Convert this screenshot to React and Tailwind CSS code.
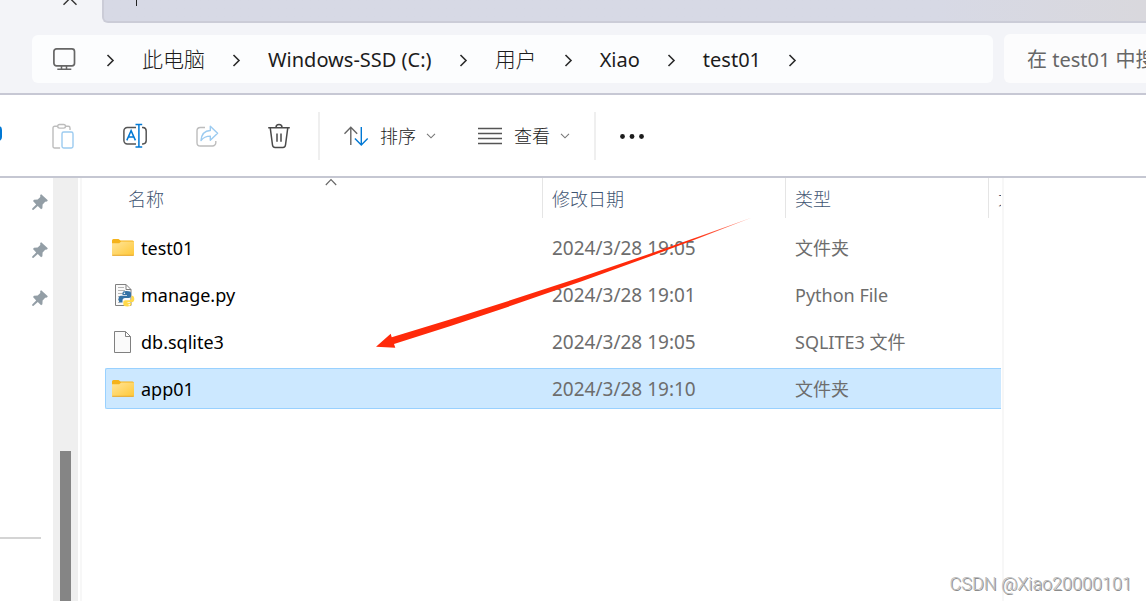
const crumbs = ["此电脑", "Windows-SSD (C:)", "用户", "Xiao", "test01"];

const files = [
  { name: "test01", date: "2024/3/28 19:05", type: "文件夹", icon: "folder" },
  { name: "manage.py", date: "2024/3/28 19:01", type: "Python File", icon: "python" },
  { name: "db.sqlite3", date: "2024/3/28 19:05", type: "SQLITE3 文件", icon: "file" },
  { name: "app01", date: "2024/3/28 19:10", type: "文件夹", icon: "folder", selected: true },
];

const CrumbChevron = () => (
  <svg className="h-3.5 w-[9px] shrink-0" viewBox="0 0 9 14" fill="none" stroke="#2b2b2b" strokeWidth="1.6">
    <path d="M1.5 2 7 7.500l-5.500 5.500" />
  </svg>
);

const SmallChevron = () => (
  <svg className="h-1.5 w-2.5 shrink-0" viewBox="0 0 10 6" fill="none" stroke="#777" strokeWidth="1.1">
    <path d="M1 .8 5 4.8 9 .8" />
  </svg>
);

const MonitorIcon = () => (
  <svg className="mr-0.5 h-6 w-6 shrink-0" viewBox="0 0 24 24" fill="none" stroke="#666" strokeWidth="1.7">
    <rect x="0.900" y="0.900" width="20.6" height="17" rx="2.6" />
    <path d="M8.500 18v3.200M13.500 18v3.200M4.300 21.300h14" strokeWidth="1.5" />
  </svg>
);

const CopyIcon = () => (
  <svg className="h-7 w-6" viewBox="0 0 24 28" fill="none" stroke="#0078d4" strokeWidth="2">
    <rect x="6" y="5" width="16" height="13" rx="3" />
  </svg>
);

const PasteIcon = () => (
  <svg className="h-7 w-6" viewBox="0 0 24 28" fill="none" strokeWidth="1.4">
    <path d="M6.5 4.2H3.7A1.7 1.7 0 0 0 2 5.9v18.3A1.7 1.7 0 0 0 3.7 26h5.4M14.5 4.2h2.8A1.7 1.7 0 0 1 19 5.9v2" stroke="#bdbdbd" />
    <rect x="6.7" y="2.5" width="7.8" height="3.6" rx="1.8" stroke="#bdbdbd" />
    <rect x="11" y="10" width="11" height="16" rx="1.7" stroke="#9ccbf0" />
  </svg>
);

const RenameIcon = () => (
  <svg className="h-7 w-6" viewBox="0 0 24 28" fill="none" strokeWidth="1.5">
    <path d="M13 5.5H4.3A3.4 3.4 0 0 0 .9 8.9v9.6a3.4 3.4 0 0 0 3.4 3.4H13M19 5.5h1a3.4 3.4 0 0 1 3.2 3.4v9.6a3.4 3.4 0 0 1-3.2 3.4h-1" stroke="#555" />
    <path d="M3.8 18.4 8.1 8.7l4.3 9.7M5.4 15.1h5.5M12.5 2.5h6.7M12.5 25h6.7M15.9 2.5V25" stroke="#0078d4" />
  </svg>
);

const ShareIcon = () => (
  <svg className="h-7 w-6" viewBox="0 0 24 28" fill="none" strokeWidth="1.4">
    <path d="M10 5.5H5.3a3.3 3.3 0 0 0-3.3 3.3v11.9A3.3 3.3 0 0 0 5.3 24h12.2a3.3 3.3 0 0 0 3.3-3.3v-1.8" stroke="#bdbdbd" />
    <path d="M15.3 4.3v4.2C9.8 8.8 6.5 12 6 18.5c2.4-3.2 5.3-4.4 9.3-4.4v4.2l7.3-7Z" stroke="#9ccbf0" strokeLinejoin="round" />
  </svg>
);

const TrashIcon = () => (
  <svg className="h-7 w-6" viewBox="0 0 24 28" fill="none" stroke="#4a4a4a" strokeWidth="1.5">
    <path d="M1.2 5.7h21.6M9 5.4a3 2.8 0 0 1 6 0M3.2 5.7 5.5 23a2.6 2.6 0 0 0 2.6 2.4h7.8a2.6 2.6 0 0 0 2.6-2.4l2.3-17.3M10 11.5v8.2M14 11.5v8.2" />
  </svg>
);

const SortIcon = () => (
  <svg className="h-6 w-[26px]" viewBox="0 0 26 24" fill="none" strokeWidth="1.4">
    <path d="M6.800 21V3.300M.5 9.700l6.300-6.400 6.400 6.400" stroke="#666" />
    <path d="M17.300 3v17.800M10.900 14.600l6.400 6.400 6.400-6.400" stroke="#0078d4" />
  </svg>
);

const FolderIcon = () => (
  <svg className="h-6 w-6 shrink-0" viewBox="0 0 24 24">
    <defs>
      <linearGradient id="folder" x1="0" y1="0" x2="1" y2="1">
        <stop offset="0" stopColor="#ffe59b" />
        <stop offset="1" stopColor="#ffc837" />
      </linearGradient>
    </defs>
    <path d="M1 4.500A1.500 1.500 0 0 1 2.500 3h5L9.500 4.400h12A1.500 1.500 0 0 1 23 5.900V9H1Z" fill="#f5b31b" />
    <path d="M1 7.200h7.200l2-1.800H23v13a1 1 0 0 1-1 1H2a1 1 0 0 1-1-1Z" fill="url(#folder)" />
    <path d="M1.200 19.300h21.600" stroke="#e6a72c" />
  </svg>
);

const FileIcon = () => (
  <svg className="h-6 w-6 shrink-0" viewBox="0 0 24 24" fill="#fafafa" stroke="#808080">
    <path d="M3.5 1.5h11l5 5v16h-16ZM14.5 1.5v5h5" />
  </svg>
);

const PythonIcon = () => (
  <svg className="h-6 w-6 shrink-0" viewBox="0 0 24 24">
    <path d="M4.500 1.500h10.500l5 5v16H4.500ZM15 1.500v5h5" fill="#fafafa" stroke="#808080" />
    <path d="M7 4.500h6M7 7.500h7M7 10.500h5M7 13.500h3M7 16.500h2M7 19.500h2" stroke="#b5b5b5" />
    <path d="M15.500 8c-3 0-4 .8-4 2.300V12h4.500v.8h-6.100C8.300 12.800 7.500 14.200 7.500 16.200s.9 3.400 2.300 3.400h1.700v-2c0-1.500 1-2.500 2.500-2.500h4c1.200 0 2-.8 2-2v-2.800C20 8.800 18.500 8 15.500 8Z" fill="#3572a5" />
    <path d="M20.500 12.700v2.200c0 1.300-1 2.400-2.400 2.400h-3.800c-1.200 0-2 .9-2 2v2c0 1.500 1.600 2.200 4 2.200s4-.8 4-2.200V20h-3.800v-.8H21c1.500 0 2.300-1.200 2.300-3.200s-.8-3.300-2-3.300Z" fill="#ffd94a" />
    <circle cx="13.400" cy="10.200" r=".8" fill="#fff" />
    <circle cx="18.200" cy="21.700" r=".8" fill="#fff" />
  </svg>
);

const icons = { folder: FolderIcon, file: FileIcon, python: PythonIcon };

const PinIcon = () => (
  <svg className="h-4 w-4" viewBox="0 0 16 16" fill="#939ea6">
    <path d="M9.200.2 15.800 6.200 15 7.400l-1.800.3-2.600 2.800-.2 3.700-1.300 1L5.800 12 1.300 15.900.2 15.800v-1.200L4.200 10.400 1 7l1-1.300 3.700-.1 2.600-2.700L8.200 1Z" />
  </svg>
);

const TopBar = () => (
  <header className="border-b-2 border-[#c7c8d4] bg-[#f3f4f8]">
    <div className="flex h-[23px] items-start">
      <button aria-label="关闭标签页" className="ml-[62px] w-4">
        <svg className="h-[7px] w-4" viewBox="0 0 16 7" fill="none" stroke="#333" strokeWidth="1.4">
          <path d="M1.500 4.800 8-1.700l6.500 6.500" />
        </svg>
      </button>
      <div className="ml-6 flex h-[23px] flex-1 rounded-bl-md border-b-2 border-l-2 border-[#cbccd7] bg-linear-to-r from-[#d7d9e5] from-80% to-[#d9d8dd]">
        <button aria-label="新建标签页" className="ml-8 h-1.5 w-px bg-[#222]" />
      </div>
    </div>
    <div className="flex items-end gap-[11px] pt-[11px] pb-2.5 pl-8">
      <nav className="flex h-12 flex-1 items-center gap-[27px] rounded-md bg-[#fcfdfe] pt-0.5 pl-[21px] text-[20px] whitespace-nowrap text-[#1c1c1c]">
        <MonitorIcon />
        <CrumbChevron />
        {crumbs.map((crumb) => (
          <div key={crumb} className="flex items-center gap-[27px]">
            <a href="#" className={/^[\x20-\x7e]+$/.test(crumb) ? "" : "text-[21px] font-light"}>
              {crumb}
            </a>
            <CrumbChevron />
          </div>
        ))}
      </nav>
      <input
        type="text"
        aria-label="搜索"
        placeholder="在 test01 中搜索"
        className="h-[49px] w-[142px] rounded-l-md bg-[#fcfcfd] pt-0.5 pl-[23px] text-[20px] outline-none placeholder:text-[#666]"
      />
    </div>
  </header>
);

const Toolbar = () => (
  <div className="flex h-[83px] items-center border-b-2 border-[#c5c7d2] bg-white text-[18px] text-[#1c1c1c]">
    <div className="-ml-[21px] flex gap-12">
      <button aria-label="复制"><CopyIcon /></button>
      <button aria-label="粘贴"><PasteIcon /></button>
      <button aria-label="重命名"><RenameIcon /></button>
      <button aria-label="共享"><ShareIcon /></button>
      <button aria-label="删除"><TrashIcon /></button>
    </div>
    <div className="ml-[27px] h-12 w-0.5 bg-[#efefef]" />
    <button className="ml-6 flex items-center gap-2.5 whitespace-nowrap">
      <SortIcon />
      <span className="pt-0.5 font-light">排序</span>
      <SmallChevron />
    </button>
    <button className="ml-[42px] flex items-center gap-2.5 whitespace-nowrap">
      <svg className="h-6 w-[26px]" viewBox="0 0 26 24" stroke="#555" strokeWidth="1.300">
        <path d="M0 4.500h24M0 9.500h24M0 14.500h24M0 19.500h24" />
      </svg>
      <span className="pt-0.5 font-light">查看</span>
      <SmallChevron />
    </button>
    <div className="ml-6 h-12 w-0.5 bg-[#efefef]" />
    <button aria-label="更多" className="ml-6">
      <svg className="h-6 w-6" viewBox="0 0 24 24" fill="#1c1c1c">
        <circle cx="2.500" cy="12.500" r="2.400" />
        <circle cx="12" cy="12.500" r="2.400" />
        <circle cx="21.500" cy="12.500" r="2.400" />
      </svg>
    </button>
  </div>
);

const Sidebar = () => (
  <aside className="flex shrink-0">
    <div className="w-[53px]">
      {[1, 2, 3].map((n) => (
        <div key={n} className="flex h-12 items-center pl-8">
          <PinIcon />
        </div>
      ))}
      <div className="mt-[215px] mr-3 h-0.5 bg-[#d4d4d4]" />
    </div>
    <div className="flex w-[25px] flex-col bg-[#efefef] px-[7px] pt-[273px]">
      <div className="w-[11px] flex-1 bg-[#858585]" />
    </div>
    <div className="ml-0.5 w-0.5 bg-[#f7f7f7]" />
  </aside>
);

const headCell = "h-[46px] p-0 text-left align-top font-light";
const headButton = "block h-10 w-full overflow-hidden border-r border-[#e5e5e5] pt-0.5 pl-[9px] text-left whitespace-nowrap";

const FileTable = () => (
  <table className="w-full table-fixed border-separate border-spacing-0 text-[19px] text-[#6d6d6d]">
    <thead className="text-[18px] text-[#3f5572]">
      <tr>
        <th className={headCell}>
          <button className="relative block h-10 w-full border-r border-[#e5e5e5] pt-0.5 pl-[23px] text-left">
            名称
            <svg className="absolute top-0 left-[220px] h-2 w-3" viewBox="0 0 12 8" fill="none" stroke="#666" strokeWidth="1.100">
              <path d="M.8 7 6 1.500 11.200 7" />
            </svg>
          </button>
        </th>
        <th className={`${headCell} w-[243px]`}>
          <button className={headButton}>修改日期</button>
        </th>
        <th className={`${headCell} w-[203px]`}>
          <button className={headButton}>类型</button>
        </th>
        <th className={`${headCell} w-3`}>
          <div className="h-10 overflow-hidden pl-[9px] leading-10 whitespace-nowrap">大小</div>
        </th>
      </tr>
    </thead>
    <tbody>
      {files.map((file) => {
        const Icon = icons[file.icon];
        const cell = file.selected
          ? "flex h-[41px] items-center border-y border-[#99d1ff] bg-[#cce8ff]"
          : "flex h-[41px] items-center border-y border-transparent";
        return (
          <tr key={file.name} className="h-[47px] whitespace-nowrap">
            <td className="p-0 text-[18px] text-black">
              <div className={`${cell} gap-1.5 rounded-l-xs border-l pl-[5px]`}>
                <Icon />
                <span className="pt-0.5">{file.name}</span>
              </div>
            </td>
            <td className="p-0">
              <div className={`${cell} pt-0.5 pl-[9px]`}>{file.date}</div>
            </td>
            <td className="p-0 text-[18px]">
              <div className={`${cell} pt-0.5 pl-[9px]`}>{file.type}</div>
            </td>
            <td className="p-0">
              <div className={cell} />
            </td>
          </tr>
        );
      })}
    </tbody>
  </table>
);

const Arrow = () => (
  <svg className="pointer-events-none absolute top-[39px] left-[294px] h-[132px] w-[377px]" viewBox="376 217 377 132">
    <defs>
      <linearGradient id="arrow" gradientUnits="userSpaceOnUse" x1="690" y1="0" x2="752" y2="0">
        <stop offset="0" stopColor="#ff2a0a" />
        <stop offset="1" stopColor="#ff2a0a" stopOpacity="0.5" />
      </linearGradient>
    </defs>
    <path d="M376 346.700 390.700 333.700 391.700 337.300Q572 283 752 217.500 573 288 394 344L395.300 347.700Z" fill="url(#arrow)" />
  </svg>
);

export default function App() {
  return (
    <div className="relative flex h-screen flex-col overflow-hidden bg-white font-['Noto_Sans','Noto_Sans_CJK_SC',sans-serif]">
      <TopBar />
      <Toolbar />
      <div className="flex min-h-0 flex-1">
        <Sidebar />
        <main className="relative min-w-0 flex-1 pr-px pl-[23px]">
          <FileTable />
          <Arrow />
        </main>
        <aside className="w-36 shrink-0 border-l-2 border-[#f7f7f7]" />
      </div>
      <div className="absolute right-3.5 bottom-1 font-['Roboto','Liberation_Sans',sans-serif] text-[18px] font-light text-[#bdbdbd] [text-shadow:1px_1px_0_#8c8c8c]">
        CSDN @Xiao20000101
      </div>
    </div>
  );
}
